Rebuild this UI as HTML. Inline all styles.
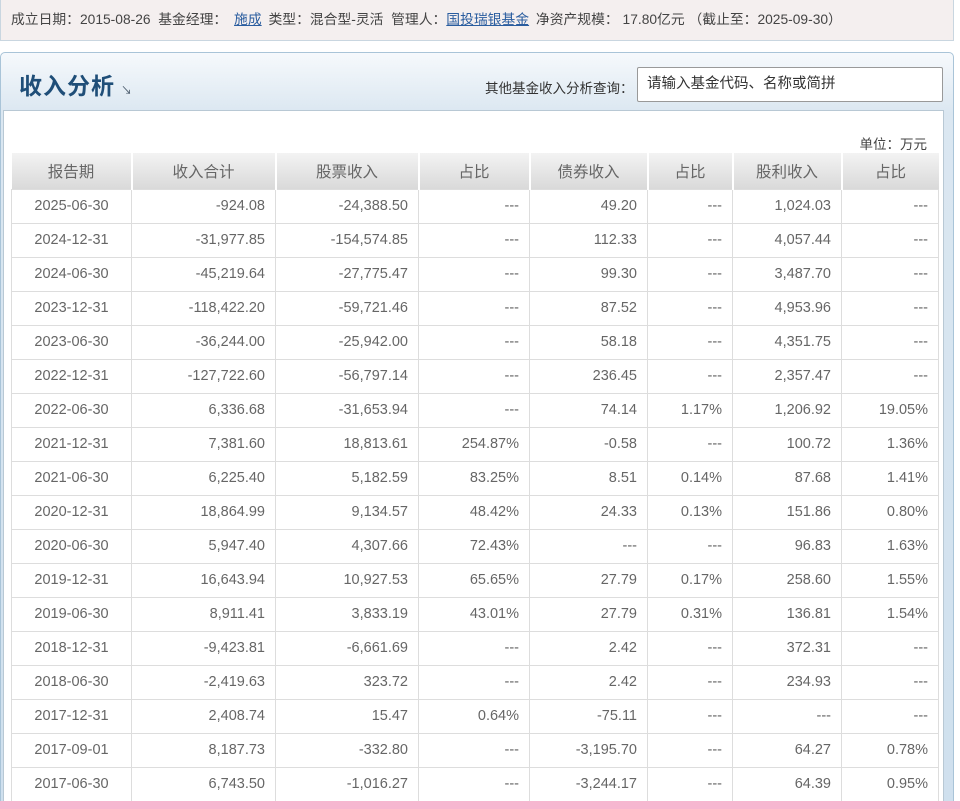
<!DOCTYPE html>
<html><head><meta charset="utf-8"><style>
*{margin:0;padding:0;box-sizing:border-box}
html,body{width:960px;height:809px;overflow:hidden}
body{background:#fff;font-family:"Liberation Sans","Noto Sans CJK SC",sans-serif;color:#666;position:relative}
.info{position:absolute;left:0;top:0;width:954px;height:41px;background:#f4efef;border:1px solid #c9d6e0;border-top:none;font-size:13.8px;line-height:40px;padding-left:10px;color:#444;white-space:nowrap}
.info a{color:#2a5d9f;text-decoration:underline;margin:0 3px}
.panel{position:absolute;left:0;top:52px;width:954px;height:760px;border:1px solid #a9c4d8;border-radius:5px 5px 0 0;background:linear-gradient(#f6f9fc,#dbe7f1 60px,#cfe0ee);}
.title{position:absolute;left:18px;top:14px;font-size:23px;font-weight:bold;color:#1f4e78;letter-spacing:1px}
.title span{font-size:11px;font-weight:normal;color:#456;margin-left:6px}
.q{position:absolute;left:484px;top:24px;font-size:13.5px;color:#333}
.inp{position:absolute;left:636px;top:14px;width:306px;height:35px;border:1px solid #999;border-radius:2px;background:#fff;font-size:14.5px;line-height:33px;padding-left:9px;color:#333}
.inner{position:absolute;left:2px;top:57px;width:941px;height:700px;background:#fff;border:1px solid #b8c8d4}
.unit{position:absolute;right:16px;top:22px;font-size:13.5px;color:#444}
table{position:absolute;left:7px;top:42px;border-collapse:collapse;font-size:14.5px}
th{height:36px;font-weight:normal;color:#666;background:linear-gradient(#f3f3f3,#d9d9d9);border-left:2px solid #fff;text-align:center;font-size:15.5px}
th:first-child{border-left:none}
td{height:34px;border:1px solid #ddd;text-align:right;padding-right:10px;color:#666}
td:first-child{text-align:center;padding-right:0}
.pink{position:absolute;left:0;top:801px;width:960px;height:8px;background:#f6b7d0}
</style></head><body>
<div class="info">成立日期：2015-08-26 &nbsp;基金经理： <a>施成</a> 类型：混合型-灵活 &nbsp;管理人：<a style="margin-left:0">国投瑞银基金</a> 净资产规模： 17.80亿元 （截止至：2025-09-30）</div>
<div class="panel">
<div class="title">收入分析<span>↘</span></div>
<div class="q">其他基金收入分析查询：</div>
<div class="inp">请输入基金代码、名称或简拼</div>
<div class="inner">
<div class="unit">单位：万元</div>
<table>
<colgroup><col style="width:120px"><col style="width:144px"><col style="width:143px"><col style="width:111px"><col style="width:118px"><col style="width:85px"><col style="width:109px"><col style="width:97px"></colgroup>
<tr><th>报告期</th><th>收入合计</th><th>股票收入</th><th>占比</th><th>债券收入</th><th>占比</th><th>股利收入</th><th>占比</th></tr>
<tr><td>2025-06-30</td><td>-924.08</td><td>-24,388.50</td><td>---</td><td>49.20</td><td>---</td><td>1,024.03</td><td>---</td></tr>
<tr><td>2024-12-31</td><td>-31,977.85</td><td>-154,574.85</td><td>---</td><td>112.33</td><td>---</td><td>4,057.44</td><td>---</td></tr>
<tr><td>2024-06-30</td><td>-45,219.64</td><td>-27,775.47</td><td>---</td><td>99.30</td><td>---</td><td>3,487.70</td><td>---</td></tr>
<tr><td>2023-12-31</td><td>-118,422.20</td><td>-59,721.46</td><td>---</td><td>87.52</td><td>---</td><td>4,953.96</td><td>---</td></tr>
<tr><td>2023-06-30</td><td>-36,244.00</td><td>-25,942.00</td><td>---</td><td>58.18</td><td>---</td><td>4,351.75</td><td>---</td></tr>
<tr><td>2022-12-31</td><td>-127,722.60</td><td>-56,797.14</td><td>---</td><td>236.45</td><td>---</td><td>2,357.47</td><td>---</td></tr>
<tr><td>2022-06-30</td><td>6,336.68</td><td>-31,653.94</td><td>---</td><td>74.14</td><td>1.17%</td><td>1,206.92</td><td>19.05%</td></tr>
<tr><td>2021-12-31</td><td>7,381.60</td><td>18,813.61</td><td>254.87%</td><td>-0.58</td><td>---</td><td>100.72</td><td>1.36%</td></tr>
<tr><td>2021-06-30</td><td>6,225.40</td><td>5,182.59</td><td>83.25%</td><td>8.51</td><td>0.14%</td><td>87.68</td><td>1.41%</td></tr>
<tr><td>2020-12-31</td><td>18,864.99</td><td>9,134.57</td><td>48.42%</td><td>24.33</td><td>0.13%</td><td>151.86</td><td>0.80%</td></tr>
<tr><td>2020-06-30</td><td>5,947.40</td><td>4,307.66</td><td>72.43%</td><td>---</td><td>---</td><td>96.83</td><td>1.63%</td></tr>
<tr><td>2019-12-31</td><td>16,643.94</td><td>10,927.53</td><td>65.65%</td><td>27.79</td><td>0.17%</td><td>258.60</td><td>1.55%</td></tr>
<tr><td>2019-06-30</td><td>8,911.41</td><td>3,833.19</td><td>43.01%</td><td>27.79</td><td>0.31%</td><td>136.81</td><td>1.54%</td></tr>
<tr><td>2018-12-31</td><td>-9,423.81</td><td>-6,661.69</td><td>---</td><td>2.42</td><td>---</td><td>372.31</td><td>---</td></tr>
<tr><td>2018-06-30</td><td>-2,419.63</td><td>323.72</td><td>---</td><td>2.42</td><td>---</td><td>234.93</td><td>---</td></tr>
<tr><td>2017-12-31</td><td>2,408.74</td><td>15.47</td><td>0.64%</td><td>-75.11</td><td>---</td><td>---</td><td>---</td></tr>
<tr><td>2017-09-01</td><td>8,187.73</td><td>-332.80</td><td>---</td><td>-3,195.70</td><td>---</td><td>64.27</td><td>0.78%</td></tr>
<tr><td>2017-06-30</td><td>6,743.50</td><td>-1,016.27</td><td>---</td><td>-3,244.17</td><td>---</td><td>64.39</td><td>0.95%</td></tr>
</table>
</div>
</div>
<div class="pink"></div>
</body></html>
